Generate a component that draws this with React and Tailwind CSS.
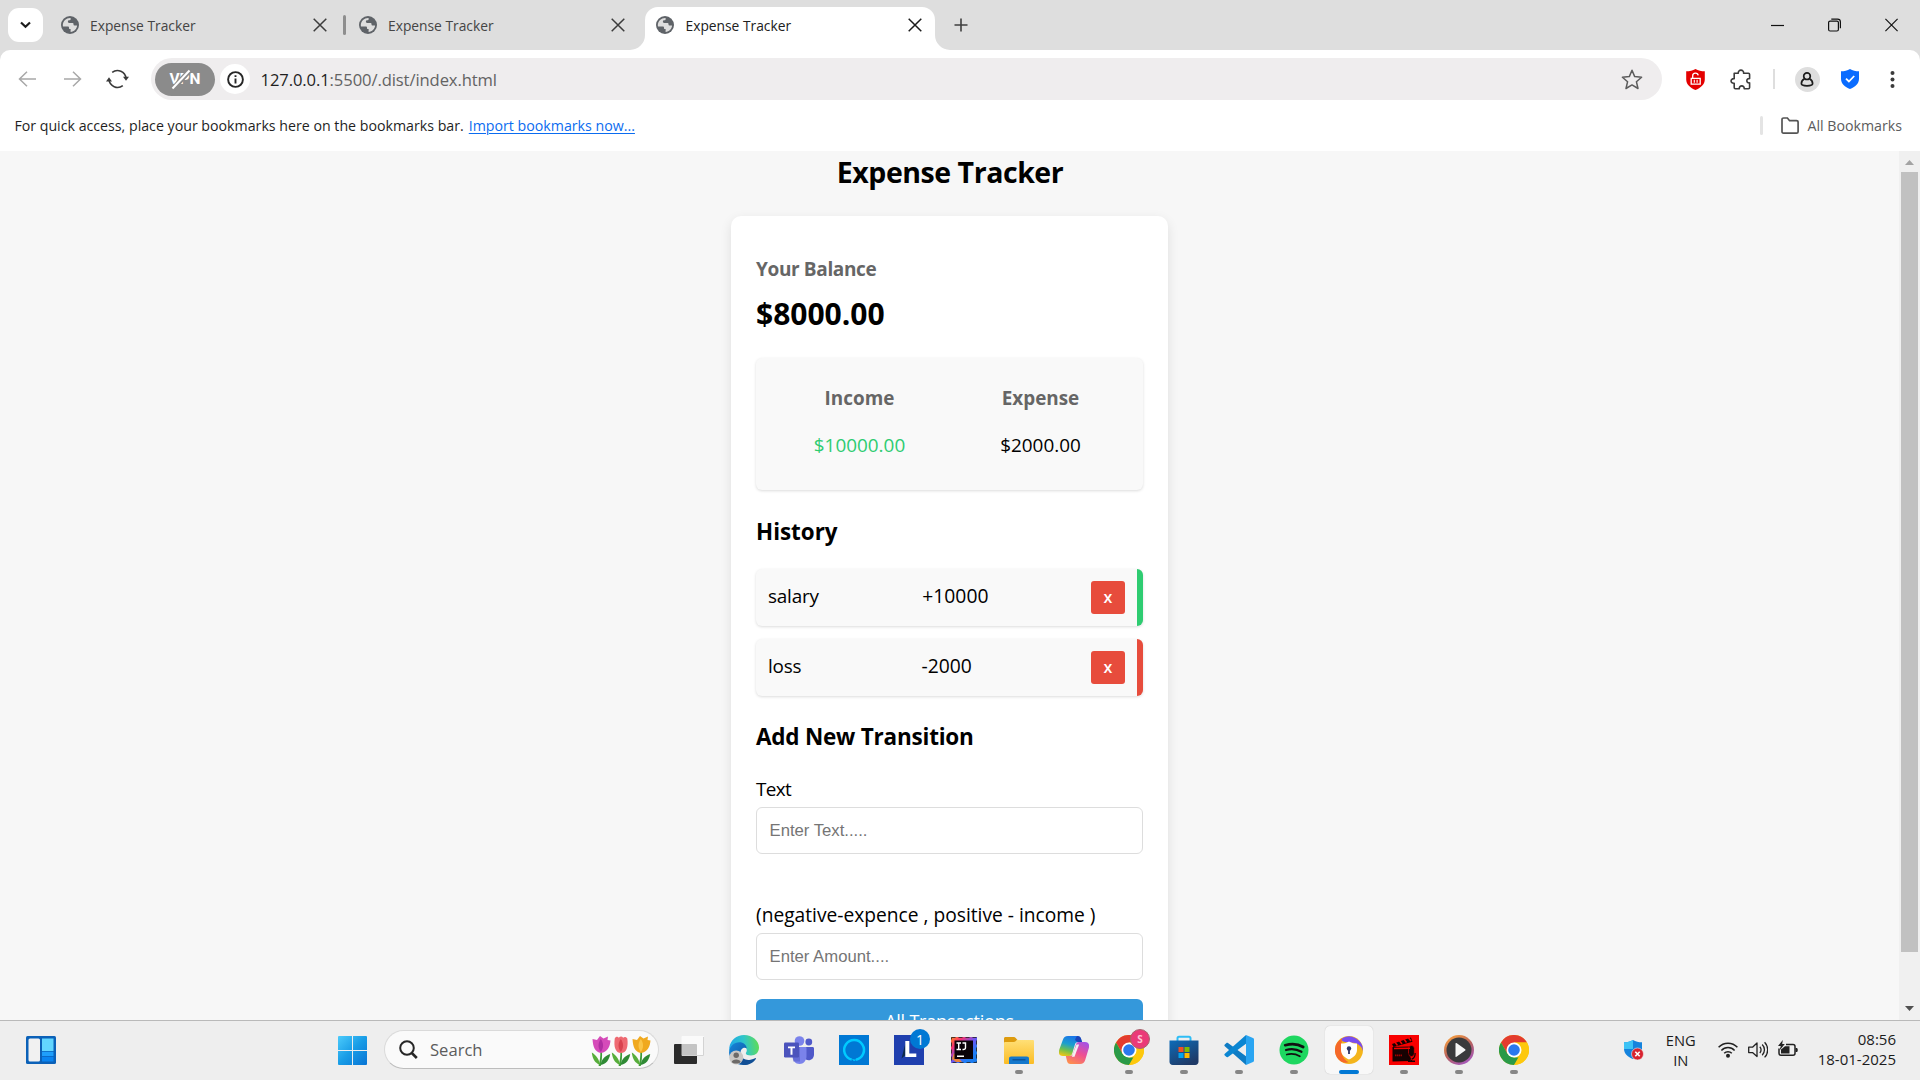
import React from "react";

/* ---------- shared glyphs ---------- */
const Globe = () => (
  <svg width="18" height="18" viewBox="0 0 18 18" className="shrink-0">
    <circle cx="9" cy="9" r="9" fill="#5f6368" />
    <path
      d="M9.6 1.9C5.600 1.600 2 4.800 1.800 9c0 .6.1 1 .2 1.400h4.800c.7 0 1.200.5 1.200 1.100v.7c0 .5.4.9.9.9h.7v2.900c3.600-.3 6.300-3.200 6.500-6.500h-2.700c-.5 0-.9-.4-.9-.9V7.800c0-.5-.4-.9-.9-.9H8.200c-.9 0-1.300-.5-1.300-1.200 0-.9.600-1.400 1.500-1.400h.4c.5 0 .8-.4.8-.8z"
      fill="#dedede"
    />
  </svg>
);

const Cross = ({ color = "#3c3c3c" }) => (
  <svg width="14" height="14" viewBox="0 0 14 14" className="shrink-0" stroke={color} strokeWidth="1.500" fill="none">
    <path d="M.7.7l12.600 12.600M13.300.7L.7 13.300" />
  </svg>
);

/* ---------- browser chrome ---------- */
function TabStrip() {
  return (
    <div className="flex h-[50px] bg-[#dedede] text-[13.8px] leading-5 text-[#454545]">
      <button className="mt-2 ml-2 flex h-[34px] w-[35px] items-center justify-center rounded-[11px] bg-white">
        <svg width="11" height="8" viewBox="0 0 11 8" fill="none" stroke="#1c1c1c" strokeWidth="2.200">
          <path d="M1 1.500l4.500 4.300L10 1.500" />
        </svg>
      </button>
      <div className="ml-[18px] flex h-[50px] w-[266px] items-center">
        <Globe />
        <span className="ml-[11px] flex-1 pt-0.5 whitespace-nowrap">Expense Tracker</span>
        <Cross />
      </div>
      <div className="mt-[15px] ml-4 h-5 w-[2.500px] rounded-full bg-[#8e8e8e]" />
      <div className="ml-[13.500px] flex h-[50px] w-[265.500px] items-center">
        <Globe />
        <span className="ml-[11px] flex-1 pt-0.5 whitespace-nowrap">Expense Tracker</span>
        <Cross />
      </div>
      <div className="ml-[5.500px] flex items-end">
        <svg width="15" height="15" viewBox="0 0 15 15"><path d="M15 0v15H0A15 15 0 0 0 15 0z" fill="#fff" /></svg>
        <div className="mt-[7px] flex h-[43px] w-[290px] items-center rounded-t-[13px] bg-white pr-[13px] pb-[7px] pl-[11px] text-[#202020]">
          <Globe />
          <span className="ml-[11.500px] flex-1 pt-0.5 whitespace-nowrap">Expense Tracker</span>
          <Cross color="#1c1c1c" />
        </div>
        <svg width="15" height="15" viewBox="0 0 15 15"><path d="M0 0v15h15A15 15 0 0 1 0 0z" fill="#fff" /></svg>
      </div>
      <svg className="mt-[18px] ml-1" width="14" height="14" viewBox="0 0 14 14" stroke="#3f3f3f" strokeWidth="1.600"><path d="M7 .5v13M.5 7h13" /></svg>
      <div className="flex-1" />
      <div className="mt-[17px] mr-[22px] flex h-4 w-[127px] items-center justify-between">
        <svg width="13" height="14" viewBox="0 0 13 14"><path d="M0 7.500h13" stroke="#111" strokeWidth="1.200" /></svg>
        <svg width="13" height="14" viewBox="0 0 13 14" fill="none" stroke="#111" strokeWidth="1.200">
          <rect x=".6" y="3.100" width="9.800" height="9.900" rx="1.500" />
          <path d="M3.300 1.100h6.200c1.700 0 2.900 1.100 2.900 2.800v6.300" />
        </svg>
        <svg width="13" height="14" viewBox="0 0 13 14" stroke="#111" strokeWidth="1.200"><path d="M.4.900l12.200 12.200M12.600.9L.4 13.100" /></svg>
      </div>
    </div>
  );
}

function Toolbar() {
  return (
    <div className="bg-[#dedede]">
      <div className="flex h-[58px] items-start rounded-t-[10px] bg-white pt-2">
        <div className="flex h-[42px] w-[151px] items-center">
          <svg className="ml-[18px]" width="19" height="16" viewBox="0 0 19 16" fill="none" stroke="#a8a8a8" strokeWidth="1.500"><path d="M9 .7L1.500 8 9 15.300M1.500 8H18" /></svg>
          <svg className="ml-[26px]" width="19" height="16" viewBox="0 0 19 16" fill="none" stroke="#a8a8a8" strokeWidth="1.500"><path d="M10 .7L17.500 8 10 15.300M17.500 8H1" /></svg>
          <svg className="ml-6" width="23" height="20" viewBox="0 0 23 20" fill="none" stroke="#3a3a3a" strokeWidth="1.600">
            <path d="M6.200 3.400A8.600 8.600 0 0 1 20 9.300M16.800 16.600A8.600 8.600 0 0 1 3 10.700" />
            <path d="M0 12.400h6L3 8.300zM17 7.800h6l-3 4z" fill="#3a3a3a" stroke="none" />
          </svg>
        </div>
        <div className="flex h-[42px] w-[1511px] items-center rounded-full bg-[#efedee] pl-1">
          <div className="relative mt-px flex h-[33px] w-[60px] items-center justify-center rounded-full bg-[#8b8b8b] font-['Roboto'] text-[15.500px] font-bold text-white">
            VPN
            <svg className="absolute top-0 left-[14px]" width="26" height="33" viewBox="0 0 26 33">
              <path d="M4 26L21 7" stroke="#8b8b8b" strokeWidth="5" />
              <path d="M3.500 25.500L20.500 7.500" stroke="#fff" strokeWidth="2" />
            </svg>
          </div>
          <div className="ml-[5px] flex size-[30px] items-center justify-center rounded-full bg-white">
            <svg width="17" height="17" viewBox="0 0 17 17" fill="none" stroke="#262626" strokeWidth="1.900">
              <circle cx="8.500" cy="8.500" r="7.400" /><path d="M8.500 7.400v5M8.500 4.200v1.900" />
            </svg>
          </div>
          <div className="flex-1 pt-0.5 pl-[10.500px] text-[16.600px] tracking-[-0.100px] text-[#636363]"><span className="text-[#1f1f1f]">127.0.0.1</span>:5500/.dist/index.html</div>
          <svg className="mr-[19px]" width="22" height="21" viewBox="0 0 22 21" fill="none" stroke="#5c5c5c" strokeWidth="1.500" strokeLinejoin="round"><path d="M11 1.300l2.700 6.300 6.900.6-5.200 4.500 1.600 6.800-6-3.600-6 3.600 1.600-6.800L1.400 8.200l6.900-.6z" /></svg>
        </div>
        <div className="flex h-[42px] items-center">
          <svg className="ml-6" width="19" height="21" viewBox="0 0 19 21">
            <path d="M9.500 0c2.600 1.700 6 2.300 9.300 2.300v8.200c0 5-4.200 8.400-9.300 10.500C4.400 18.900.2 15.500.2 10.500V2.300C3.500 2.300 6.900 1.700 9.500 0z" fill="#e40000" />
            <path d="M5.200 9.300h9v5.900h-9zM6.700 9V6.700c0-3.200 5-3.400 5.500-.4" fill="none" stroke="#fff" strokeWidth="1.300" />
            <path d="M8.300 10.700v3M11.100 10.700v3" stroke="#fff" strokeWidth="1.100" />
          </svg>
          <svg className="ml-[25px]" width="21" height="21" viewBox="0 0 21 21" fill="none" stroke="#3b3b3b" strokeWidth="1.600" strokeLinejoin="round">
            <path d="M4.200 4.300h4.100c-.6-4.200 5.900-4.200 5.300 0H18.500c.8 0 1.100.4 1.100 1.100v4.200c-3.700-.5-3.700 4.800 0 4.300v4.700c0 .8-.4 1.200-1.100 1.200h-4.300c.5-3.900-5.400-3.900-4.900 0H5.400c-.8 0-1.200-.4-1.200-1.200v-4.400c-4.200.5-4.200-5 0-4.500z" />
          </svg>
          <div className="ml-[22px] h-5 w-[1.500px] bg-[#dedede]" />
          <div className="ml-5 flex size-[25px] items-center justify-center rounded-full bg-[#dedede]">
            <svg width="14" height="15" viewBox="0 0 14 15" fill="none" stroke="#1c1c1c" strokeWidth="1.700"><circle cx="7" cy="4.200" r="3.300" /><path d="M4.500 6.800C2.300 8 1.400 9.900 1.400 11.500c0 1.600 2.300 2.300 5.600 2.300s5.600-.7 5.600-2.300c0-1.600-.9-3.500-3.100-4.700" /></svg>
          </div>
          <svg className="ml-[21px]" width="18" height="20" viewBox="0 0 18 20"><path d="M9 0c2.600 1.700 5.700 2.300 9 2.300v7.400c0 5-4 8.300-9 10.300-5-2-9-5.300-9-10.300V2.300C3.300 2.300 6.400 1.700 9 0z" fill="#0a6cff" /><path d="M5 9.600l2.900 2.900 5.300-5.500" fill="none" stroke="#fff" strokeWidth="1.800" /></svg>
          <svg className="ml-[31px]" width="5" height="19" viewBox="0 0 5 19" fill="#3b3b3b"><circle cx="2.500" cy="3" r="2" /><circle cx="2.500" cy="9.500" r="2" /><circle cx="2.500" cy="16" r="2" /></svg>
        </div>
      </div>
    </div>
  );
}

function BookmarksBar() {
  return (
    <div className="flex h-[43px] bg-white pt-[8px] pl-[14.400px] text-[14.200px] leading-[20px] whitespace-nowrap text-[#1f1f1f]">
      <span>For quick access, place your bookmarks here on the bookmarks bar.</span>
      <a className="ml-[5px] text-[#0b6cf0] underline decoration-1 underline-offset-2">Import bookmarks now...</a>
      <div className="flex-1" />
      <div className="h-[19px] w-[3px] rounded-full bg-[#e4e4e4]" />
      <svg className="ml-[18px]" width="18" height="19" viewBox="0 0 18 19" fill="none" stroke="#555" strokeWidth="1.700"><path d="M1 15.500V3.600C1 2.400 1.600 2 2.600 2h3.800l2.200 2.700h6.800c1.100 0 1.700.6 1.700 1.600v9.400c0 1-.6 1.500-1.600 1.500H2.500C1.500 17.200 1 16.600 1 15.500z" /></svg>
      <span className="mr-[18px] ml-2 text-[#5c5c5c]">All Bookmarks</span>
    </div>
  );
}

/* ---------- expense tracker page ---------- */
const history = [
  { name: "salary", amount: "+10000", edge: "border-[#2ecc71]" },
  { name: "loss", amount: "-2000", edge: "border-[#e74c3c]" },
];

function Tracker() {
  return (
    <main className="flex min-w-0 flex-1 flex-col items-center text-[18.900px] leading-7 text-black">
      <h1 className="h-[42px] pl-px text-[28.500px] leading-[42px] font-bold tracking-[-0.450px]">Expense Tracker</h1>
      <div className="mt-[23px] h-[1000px] w-[437px] shrink-0 rounded-[10px] bg-white px-[25px] pt-[39px] shadow-[0_4px_12px_rgba(0,0,0,0.1)]">
        <h4 className="text-[19px] font-bold tracking-[-0.360px] text-[#666]">Your Balance</h4>
        <div className="mt-2.5 text-[30px] leading-[42px] font-bold">$8000.00</div>
        <div className="mt-[23px] flex h-[132px] justify-center rounded-[6px] bg-[#f9f9f9] pt-[26px] pl-px text-center shadow-[0_1px_3px_rgba(0,0,0,0.14)]">
          <div className="w-[181px]">
            <h4 className="font-bold text-[#666]">Income</h4>
            <p className="mt-[19px] text-[#2ecc71]">$10000.00</p>
          </div>
          <div className="w-[181px]">
            <h4 className="font-bold text-[#666]">Expense</h4>
            <p className="mt-[19px]">$2000.00</p>
          </div>
        </div>
        <h3 className="mt-[26px] text-[22.400px] leading-8 font-bold">History</h3>
        <ul className="mt-[21px] flex flex-col gap-[13px]">
          {history.map((h) => (
            <li key={h.name} className={"flex h-[57px] items-start justify-between rounded-[6px] border-r-[6px] bg-[#f9f9f9] px-3 pt-3 shadow-[0_1px_3px_rgba(0,0,0,0.14)] " + h.edge}>
              <span className="pt-px tracking-[-0.200px]">{h.name}</span>
              <span className="pt-px pl-px text-[19.300px]">{h.amount}</span>
              <button className="h-[33px] w-[34px] rounded-[3px] bg-[#e74c3c] text-[16px] leading-[33px] font-semibold text-white">x</button>
            </li>
          ))}
        </ul>
        <h3 className="mt-[25px] text-[22.500px] leading-8 font-bold tracking-[-0.220px]">Add New Transition</h3>
        <label className="mt-[22px] block tracking-[-0.600px]">Text</label>
        <input placeholder="Enter Text....." className="mt-1 block h-[47px] w-full rounded-[6px] border border-[#ddd] px-[12.500px] font-['Liberation_Sans'] text-[16.700px] placeholder:text-[#757575]" />
        <label className="mt-[47px] block text-[19.200px] whitespace-nowrap">(negative-expence , positive - income )</label>
        <input placeholder="Enter Amount...." className="mt-1 block h-[47px] w-full rounded-[6px] border border-[#ddd] px-[12.500px] font-['Liberation_Sans'] text-[16.700px] placeholder:text-[#757575]" />
        <button className="mt-[19px] block h-11 w-full rounded-[6px] bg-[#3498db] text-[18px] tracking-[-0.200px] text-white">All Transactions</button>
      </div>
    </main>
  );
}

function Scrollbar() {
  return (
    <div className="flex w-[21px] flex-col items-center bg-[#f0f0f0]">
      <svg className="mt-[9px]" width="9" height="5" viewBox="0 0 9 5"><path d="M0 5L4.500 0 9 5z" fill="#a3a3a3" /></svg>
      <div className="mt-[7px] h-[780px] w-[17px] bg-[#c1c1c1]" />
      <svg className="mt-[54px]" width="9" height="5" viewBox="0 0 9 5"><path d="M0 0h9L4.500 5z" fill="#505050" /></svg>
    </div>
  );
}

/* ---------- taskbar icons ---------- */
const Edge = () => (
  <svg width="30" height="30" viewBox="0 0 30 30">
    <defs>
      <linearGradient id="edA" x1="0" y1=".4" x2="1" y2=".3"><stop offset="0" stopColor="#1fa9e8" /><stop offset=".5" stopColor="#2fc5c9" /><stop offset="1" stopColor="#62dd52" /></linearGradient>
      <linearGradient id="edB" x1="0" y1="0" x2="1" y2="1"><stop offset="0" stopColor="#1787dc" /><stop offset="1" stopColor="#0a4a93" /></linearGradient>
    </defs>
    <path d="M.3 12.500C1.500 5 7.500 0 15 0c8.500 0 15 6 15 12.500 0 5-3.500 8-8 8-3 0-5.200-1-5.200-2.300 0-.8 1-1.200 1-3 0-2.600-2.600-5.200-6.500-5.200C5.800 10 1.500 13 .3 17z" fill="url(#edA)" />
    <path d="M.1 17C.6 11.500 5 7.300 10.500 7.300c3.800 0 7 2.600 7.300 6.300-1.600-1.800-6.300-1-6.300 4.400 0 5.500 5 9.500 11 8.500-2.200 2.300-5 3.500-8 3.500C6 30-.5 23.500.1 17z" fill="url(#edB)" />
    <path d="M11.500 19c.8 4.600 5.500 6.700 10 5.700 2.800-.6 4.800-2 5.400-1.800.8.4-3 6.600-10.900 7.100-6-1-8.500-7-4.500-11z" fill="#114f95" />
    <circle cx="7.200" cy="22.500" r="7" fill="#c9c7c5" />
    <circle cx="7.200" cy="20.300" r="2.700" fill="#6d6a68" /><path d="M2.800 27c0-3.500 8.800-3.500 8.800 0-1.500 2-7.300 2-8.800 0z" fill="#6d6a68" />
  </svg>
);
const Teams = () => (
  <svg width="30" height="28" viewBox="0 0 30 28">
    <circle cx="15.500" cy="5" r="4.800" fill="#7b83eb" /><circle cx="24.800" cy="6" r="3.400" fill="#5059c9" />
    <path d="M20 11h8.500c.8 0 1.500.6 1.500 1.400v6c0 3.300-2.300 5.800-5.500 5.800S20 22 20 18.500z" fill="#5059c9" />
    <path d="M9 11h12.500c.6 0 1 .5 1 1v8c0 4.500-3 8-7 8s-7-3.500-7-8z" fill="#7b83eb" />
    <path d="M9 11h7v14.500H9z" fill="#4b53bc" opacity=".45" />
    <rect x="0" y="6.500" width="15" height="15" rx="1.200" fill="#4b53bc" />
    <path d="M4 10.400h7v1.900H8.500v6.400h-2v-6.400H4z" fill="#fff" />
  </svg>
);
const Alexa = () => (
  <svg width="30" height="30" viewBox="0 0 30 30"><rect width="30" height="30" fill="#0078d4" /><path d="M12.700 24.600A9.900 9.900 0 1 1 17 24.700" fill="none" stroke="#00caff" strokeWidth="2.500" /><path d="M12.500 23.500q3 1.700 6.500.300l-4 2.500z" fill="#00caff" /></svg>
);
const Lively = () => (
  <div className="relative size-[30px] bg-[#1f3fae]">
    <svg width="30" height="30" viewBox="0 0 30 30"><path d="M7.500 23.500l4-3.500V8z" fill="#0c2a4a" /><path d="M11.300 6h4v12.500h7V22h-11z" fill="#fff" /></svg>
    <span className="absolute -top-[6px] left-[16px] flex size-5 items-center justify-center rounded-full bg-[#0078d4] text-[14px] text-white">1</span>
  </div>
);
const IntelliJ = () => (
  <svg width="26" height="26" viewBox="0 0 26 26">
    <defs><linearGradient id="ij" x1="0" y1="0" x2="1" y2="1"><stop offset="0" stopColor="#ff8a1c" /><stop offset=".22" stopColor="#f7316c" /><stop offset=".5" stopColor="#6a57f5" /><stop offset=".75" stopColor="#1f7ef5" /><stop offset="1" stopColor="#1778e8" /></linearGradient></defs>
    <rect width="26" height="26" fill="url(#ij)" /><rect x=".5" y=".5" width="25" height="25" fill="none" stroke="#222" strokeDasharray="4 3" strokeOpacity=".8" />
    <path d="M3 16l-2 6 4 3h6z" fill="#e8803c" />
    <rect x="3.500" y="3.500" width="18.500" height="18.500" fill="#0a0209" />
    <path d="M5.500 6h4.500M7.700 6v6.500M5.500 12.500h4.500M11.500 6h3v4.800c0 1.300-1 1.900-3 1.700M6 19.300h7" fill="none" stroke="#fff" strokeWidth="1.400" />
  </svg>
);
const Folder = () => (
  <svg width="30" height="27" viewBox="0 0 30 27">
    <defs><linearGradient id="fo" x1="0" y1="0" x2="0" y2="1"><stop offset="0" stopColor="#ffdf76" /><stop offset="1" stopColor="#fbbc24" /></linearGradient></defs>
    <path d="M0 1.500C0 .6.600 0 1.500 0h8c1 0 1.500.3 2.200 1l2 2.200H28v5H0z" fill="#dd9b0e" />
    <path d="M0 6.200C0 5.300.5 5 1.300 5h8.400c.8 0 1.300-.2 1.900-.8L12.800 3h15.900c.8 0 1.300.5 1.300 1.300v21.400c0 .8-.5 1.300-1.300 1.300H1.300C.5 27 0 26.500 0 25.700z" fill="url(#fo)" />
    <path d="M5 27v-5.300c0-1.300.8-2.200 2.200-2.200h15.600c1.400 0 2.200.9 2.200 2.200V27z" fill="#1478cc" /><path d="M8.500 22.800h13" stroke="#0a4b8f" strokeWidth="1.200" />
  </svg>
);
const Copilot = () => (
  <svg width="30" height="28" viewBox="0 0 30 28">
    <defs>
      <linearGradient id="cpA" x1=".5" y1="0" x2=".2" y2="1"><stop offset="0" stopColor="#1a76e8" /><stop offset=".4" stopColor="#1c9fce" /><stop offset=".7" stopColor="#6fc04d" /><stop offset="1" stopColor="#f3c613" /></linearGradient>
      <linearGradient id="cpB" x1=".8" y1="0" x2=".3" y2="1"><stop offset="0" stopColor="#a453e6" /><stop offset=".5" stopColor="#ee4f93" /><stop offset="1" stopColor="#fd8c50" /></linearGradient>
    </defs>
    <path d="M9 0h9.500c2 0 3 1.200 3.500 3l.7 3h-3c-2.500 0-3.400 1.200-4 3.200l-2.500 8.300c-.5 1.700-1.300 2.500-3 2.500H4c-4 0-4.700-3-3.700-6.500L3.800 4C4.700 1.200 6 0 9 0z" fill="url(#cpA)" />
    <path d="M18 0c2.500 0 3.600 1 4.200 3l.9 3h-3.500c-2.300 0-3-1-3.500-2.700z" fill="#1b45ba" />
    <path d="M21 28h-9.500c-2 0-3-1.200-3.500-3l-1.200-5h4c2 0 3-1 3.500-2.700L16.800 9c.5-2 1.400-3 3.200-3h6c4 0 4.700 3 3.700 6.500L26.200 24c-.9 2.800-2.200 4-5.200 4z" fill="url(#cpB)" />
    <path d="M17.500 8.500h2.600l-4.600 12.300h-2.700z" fill="#f4f0f2" />
  </svg>
);
const Chrome = () => (
  <svg width="30" height="30" viewBox="0 0 30 30">
    <circle cx="15" cy="15" r="15" fill="#fdc80d" />
    <path d="M2 7.500A15 15 0 0 1 28 7.500H15L8.500 18.700z" fill="#e33b2e" />
    <path d="M2 7.500L8.500 18.700 15 22.500h6.500L15 30A15 15 0 0 1 2 7.500z" fill="#2a9a48" />
    <path d="M15 7.500h13A15 15 0 0 1 15 30l6.500-11.300z" fill="#fdc80d" />
    <circle cx="15" cy="15" r="7.500" fill="#fff" /><circle cx="15" cy="15" r="5.800" fill="#2b78ee" />
  </svg>
);
const ChromeUser = () => (
  <div className="relative size-[30px]">
    <Chrome />
    <span className="absolute -top-[6px] left-[16px] flex size-5 items-center justify-center rounded-full border border-[#a8646e] bg-[#ea3a78] text-[10px] font-bold text-[#ffc4d6]">S</span>
  </div>
);
const Store = () => (
  <svg width="30" height="30" viewBox="0 0 30 30">
    <defs><linearGradient id="st" x1="0" y1="0" x2=".6" y2="1"><stop offset="0" stopColor="#0d6cb9" /><stop offset="1" stopColor="#1f3a67" /></linearGradient></defs>
    <path d="M8.500 6V3.200c0-.9.5-1.500 1.500-1.500h10c1 0 1.500.6 1.500 1.500V6" fill="none" stroke="#2fbdf5" strokeWidth="2" />
    <path d="M.5 5.500h29v21c0 2-1.200 3.500-3.200 3.500H3.700C1.700 30 .5 28.500.5 26.500z" fill="url(#st)" />
    <path d="M9.500 12h5v5h-5z" fill="#f25022" /><path d="M15.500 12h5v5h-5z" fill="#7fba00" /><path d="M9.500 18h5v5h-5z" fill="#00a4ef" /><path d="M15.500 18h5v5h-5z" fill="#ffb900" />
  </svg>
);
const Code = () => (
  <svg width="30" height="30" viewBox="0 0 30 30">
    <path d="M22 30L.8 11.300c-.6-.5-.6-1.100 0-1.700L2.200 8.200c.6-.5 1.200-.5 1.800-.1L23 22z" fill="#0f7cc4" />
    <path d="M22 0L.8 18.700c-.6.5-.6 1.100 0 1.700l1.400 1.400c.6.500 1.200.5 1.800.1L23 8z" fill="#0b86d2" />
    <path d="M22 0l7 3c.7.300 1 .8 1 1.500v21c0 .7-.3 1.200-1 1.500l-7 3z" fill="#2aa5f2" />
  </svg>
);
const Spotify = () => (
  <svg width="30" height="30" viewBox="0 0 30 30"><circle cx="15" cy="15" r="14.500" fill="#1ed760" /><g fill="none" stroke="#111" strokeLinecap="round"><path d="M6.200 10.200c6-1.700 13-1.200 18 1.800" strokeWidth="2.700" /><path d="M7 15c5-1.500 11-.8 15.500 1.800" strokeWidth="2.200" /><path d="M7.800 19.500c4.500-1.200 9-.6 13 1.700" strokeWidth="1.800" /></g></svg>
);
const Secure = () => (
  <svg width="28" height="28" viewBox="0 0 28 28">
    <circle cx="14" cy="14" r="14" fill="#f4b51c" />
    <path d="M6 3a14 14 0 0 1 22 12c-1.500-5.500-6-8.500-12-8.500C10 6.500 6.500 5.500 6 3z" fill="#7a4df0" />
    <path d="M7 2.500C-2 7-2.500 20 6 25.500c3 1.500 6 1.500 7.500.8C7 22 5.500 16 6.500 9z" fill="#f5682a" />
    <path d="M14 5.500c3 1.700 5 2 8 2v6.500c0 4.500-3.500 7.500-8 9.500-4.500-2-8-5-8-9.500V7.500c3 0 5-.3 8-2z" fill="#fff" />
    <circle cx="14" cy="12.500" r="2.200" fill="#2c3566" /><path d="M13.100 13h1.800v5h-1.800z" fill="#2c3566" />
  </svg>
);
const Movie = () => (
  <svg width="30" height="30" viewBox="0 0 30 30"><rect width="30" height="30" fill="#f80000" /><g fill="#160202"><path d="M3.500 12l18-.5V26l-18 .5z" /><path d="M3 9L22 2.500l1.500 4.200L4.500 12z" /><rect x="19.500" y="10.500" width="5.800" height="11" rx="2.900" stroke="#f80000" strokeWidth=".6" /><path d="M18 18c0 9 8.800 9 8.800 0h-1.200c0 7-6.400 7-6.400 0zM21.600 23h1.500v3h-1.500zM19 25.500h7V27h-7z" /></g><path d="M6 7.200l2.500 3.300M10.500 5.700l2.500 3.300M15 4.200l2.500 3.300M19.500 2.700l2.500 3.300M5 13.500l16-.3" stroke="#f80000" strokeWidth="1.500" /><path d="M6 20.300h7" stroke="#a00000" strokeWidth="1.800" strokeDasharray="1.500 .5" /></svg>
);
const Media = () => (
  <svg width="30" height="30" viewBox="0 0 30 30">
    <defs><linearGradient id="me" x1=".2" y1="0" x2=".8" y2="1"><stop offset="0" stopColor="#f9a03e" /><stop offset=".5" stopColor="#b5605f" /><stop offset="1" stopColor="#a458c9" /></linearGradient></defs>
    <circle cx="15" cy="15" r="15" fill="url(#me)" /><circle cx="15" cy="15" r="12.500" fill="#3a3a3c" /><path d="M11.500 8.500c0-.6.5-.7 1-.4l8.700 6.200c.5.400.5.900 0 1.300l-8.700 6.200c-.5.300-1 .1-1-.4z" fill="#f5f5f5" />
  </svg>
);

const apps = [
  { Icon: Edge }, { Icon: Teams }, { Icon: Alexa }, { Icon: Lively }, { Icon: IntelliJ },
  { Icon: Folder, open: true }, { Icon: Copilot }, { Icon: ChromeUser, open: true },
  { Icon: Store, open: true }, { Icon: Code, open: true }, { Icon: Spotify, open: true },
  { Icon: Secure, active: true }, { Icon: Movie, open: true }, { Icon: Media, open: true }, { Icon: Chrome, open: true },
];

const Tulip = ({ a, b, pointed }) => (
  <svg width="20" height="30" viewBox="0 0 20 30">
    <path d="M9.300 15.500h1.700c.3 5-.2 10-1.200 14.500H7.600c1.300-5 1.900-9.500 1.700-14.500z" fill="#3d9a37" />
    <path d="M9 29C8 23 5 19 .8 16.500 1.500 23 4 27 9 29z" fill="#57ad3a" /><path d="M9.500 29c1-6 4.500-9 9.700-11-1 6-4 10-9.700 11z" fill="#2f8a35" />
    {pointed
      ? <path d="M10 17C4 16 2 11 1.500 3l4.500 1L9 0l3.500 2.500L17 .5l-.5 3.500 3 .5C19 11 16.500 16 10 17z" fill={a} />
      : <path d="M10 17C4.500 17 2.500 11 3.800 2.300c1.500-2 3-1.800 4-.6 1.500-1.500 3-1.500 4.400 0C13.500.5 15.200 1 16.300 2.500 17.500 11 15.500 17 10 17z" fill={a} />}
    <path d="M9.800 16C6.800 12 6.800 7 9.800 3c3 4 3 9 0 13z" fill={b} />
  </svg>
);

function Taskbar() {
  return (
    <footer className="flex h-[60px] shrink-0 border-t border-[#b9b9b9] bg-[#eeeeee] text-[14.700px] text-[#1c1c1c]">
      <svg className="mt-[15px] ml-[26px] shrink-0" width="30" height="28" viewBox="0 0 30 28">
        <rect width="30" height="28" rx="1.500" fill="#0b61b8" /><rect x="2.500" y="2.500" width="11.500" height="23" rx="1.500" fill="#f1f1f1" />
        <path d="M16 2.500h11.500V15H16z" fill="#62d6ff" /><path d="M16 15.700h11.500V20H16z" fill="#1f9ffb" /><path d="M16 20.700h11.500v4.800H16z" fill="#0a84f0" />
      </svg>
      <svg className="mt-[15px] ml-[282px] shrink-0" width="29" height="29" viewBox="0 0 29 29">
        <defs><linearGradient id="wn" x1="0" y1="0" x2="1" y2="1" gradientUnits="objectBoundingBox"><stop offset="0" stopColor="#4ccbfb" /><stop offset=".5" stopColor="#189ce6" /><stop offset="1" stopColor="#0873d4" /></linearGradient></defs>
        <path d="M0 1a1 1 0 0 1 1-1h13v14H0zM15 0h13a1 1 0 0 1 1 1v13H15zM0 15h14v14H1a1 1 0 0 1-1-1zM15 15h14v13a1 1 0 0 1-1 1H15z" fill="url(#wn)" />
      </svg>
      <div className="mt-[9px] ml-[17px] flex h-[39px] w-[275px] shrink-0 items-center rounded-full border border-[#dadada] border-b-[#bdbdbd] bg-[#fafafa] pl-[14px]">
        <svg width="19" height="19" viewBox="0 0 19 19" fill="none" stroke="#262626" strokeWidth="2"><circle cx="8" cy="8" r="6.800" /><path d="M12.800 13l5 5" strokeWidth="2.600" /></svg>
        <span className="ml-[12px] flex-1 pt-0.5 text-[16.600px] text-[#5c5c5c]">Search</span>
        <div className="mt-0.5 mr-[7px] flex">
          <Tulip a="#d54bb9" b="#b02fa3" pointed />
          <Tulip a="#ee6a72" b="#d9434f" />
          <Tulip a="#f0a91f" b="#fbc548" pointed />
        </div>
      </div>
      <svg className="mt-[15px] ml-[15px] shrink-0" width="30" height="28" viewBox="0 0 30 28">
        <rect x="0" y="8" width="23" height="20" rx="1" fill="#2b2b2b" /><rect x="7.500" y="0" width="22.500" height="20" rx="1" fill="#fff" opacity=".72" /><path d="M29.500 1v18.500H8" fill="none" stroke="#d3d3d3" />
      </svg>
      <div className="ml-4 flex gap-[7px]">
        {apps.map(({ Icon, open, active }, i) => (
          <div key={i} className={"mt-[5px] flex h-12 w-12 flex-col items-center rounded-[5px] " + (active ? "bg-[#f8f8f8] shadow-[0_0_1px_rgba(0,0,0,0.25)]" : "")}>
            <div className="flex h-[44px] items-center justify-center pt-[4px]"><Icon /></div>
            {active ? <div className="h-1 w-5 rounded-full bg-[#0078d4]" /> : open ? <div className="h-1 w-2 rounded-full bg-[#868686]" /> : null}
          </div>
        ))}
      </div>
      <div className="flex-1" />
      <svg className="mt-[19px] shrink-0" width="20" height="20" viewBox="0 0 20 20">
        <path d="M9 0c2.600 1.700 5.700 2.300 9 2.300v6.400c0 5-4 8.300-9 10.300-5-2-9-5.300-9-10.300V2.300C3.300 2.300 6.400 1.700 9 0z" fill="#1583dd" /><path d="M9 0v9H0V2.300C3.300 2.300 6.400 1.700 9 0z" fill="#3cc3f5" />
        <circle cx="13.500" cy="14" r="6" fill="#d8232f" stroke="#eee" strokeWidth=".6" /><path d="M11.300 11.800l4.400 4.400M15.700 11.800l-4.400 4.400" stroke="#fff" strokeWidth="1.600" />
      </svg>
      <div className="mt-[9px] ml-[18px] w-[38px] text-center leading-5">ENG<br />IN</div>
      <svg className="mt-[20px] ml-[18px] shrink-0" width="20" height="17" viewBox="0 0 20 17" fill="none" stroke="#222" strokeWidth="1.500"><path d="M.6 6.300a13 13 0 0 1 18.800 0M3.400 9.400a9 9 0 0 1 13.200 0M6.200 12.300a5.200 5.200 0 0 1 7.600 0" /><circle cx="10" cy="14.800" r="2" fill="#222" stroke="none" /></svg>
      <svg className="mt-[20px] ml-[10px] shrink-0" width="20" height="18" viewBox="0 0 20 18" fill="none" stroke="#222" strokeWidth="1.300"><path d="M.7 6.200h3.800L9 2v13.500L4.500 11.600H.7z" strokeLinejoin="round" /><path d="M11.800 5.700c1.700 1.700 1.700 4.600 0 6.300M14.200 3.500c3 3 3 7.700 0 10.700M16.600 1.300c4.100 4.100 4.100 11 0 15.100" /></svg>
      <svg className="mt-[19px] ml-[10px] shrink-0" width="20" height="17" viewBox="0 0 20 17"><path d="M8 4.500h7c1.300 0 2 .8 2 2v6.800c0 1.200-.7 2-2 2H3c-1.300 0-2-.8-2-2V8.500" fill="none" stroke="#222" strokeWidth="1.500" /><path d="M17.500 8h1.300c1.300 0 1.300 4 0 4h-1.300z" fill="#222" /><path d="M7 6.300h4.500v7.300H3v-4z" fill="#222" /><path d="M4.800 0L0 6h2.800L1.500 10.500 6.800 4H4.200z" fill="#222" /></svg>
      <div className="mt-[8px] mr-6 ml-5 text-right text-[15px] leading-5 whitespace-nowrap">08:56<br />18-01-2025</div>
    </footer>
  );
}

export default function App() {
  return (
    <div className="flex h-[1080px] w-[1920px] flex-col overflow-hidden bg-white font-['Open_Sans','Noto_Sans',sans-serif]">
      <TabStrip />
      <Toolbar />
      <BookmarksBar />
      <div className="flex min-h-0 flex-1 overflow-hidden bg-[#f7f7f7]">
        <Tracker />
        <Scrollbar />
      </div>
      <Taskbar />
    </div>
  );
}
